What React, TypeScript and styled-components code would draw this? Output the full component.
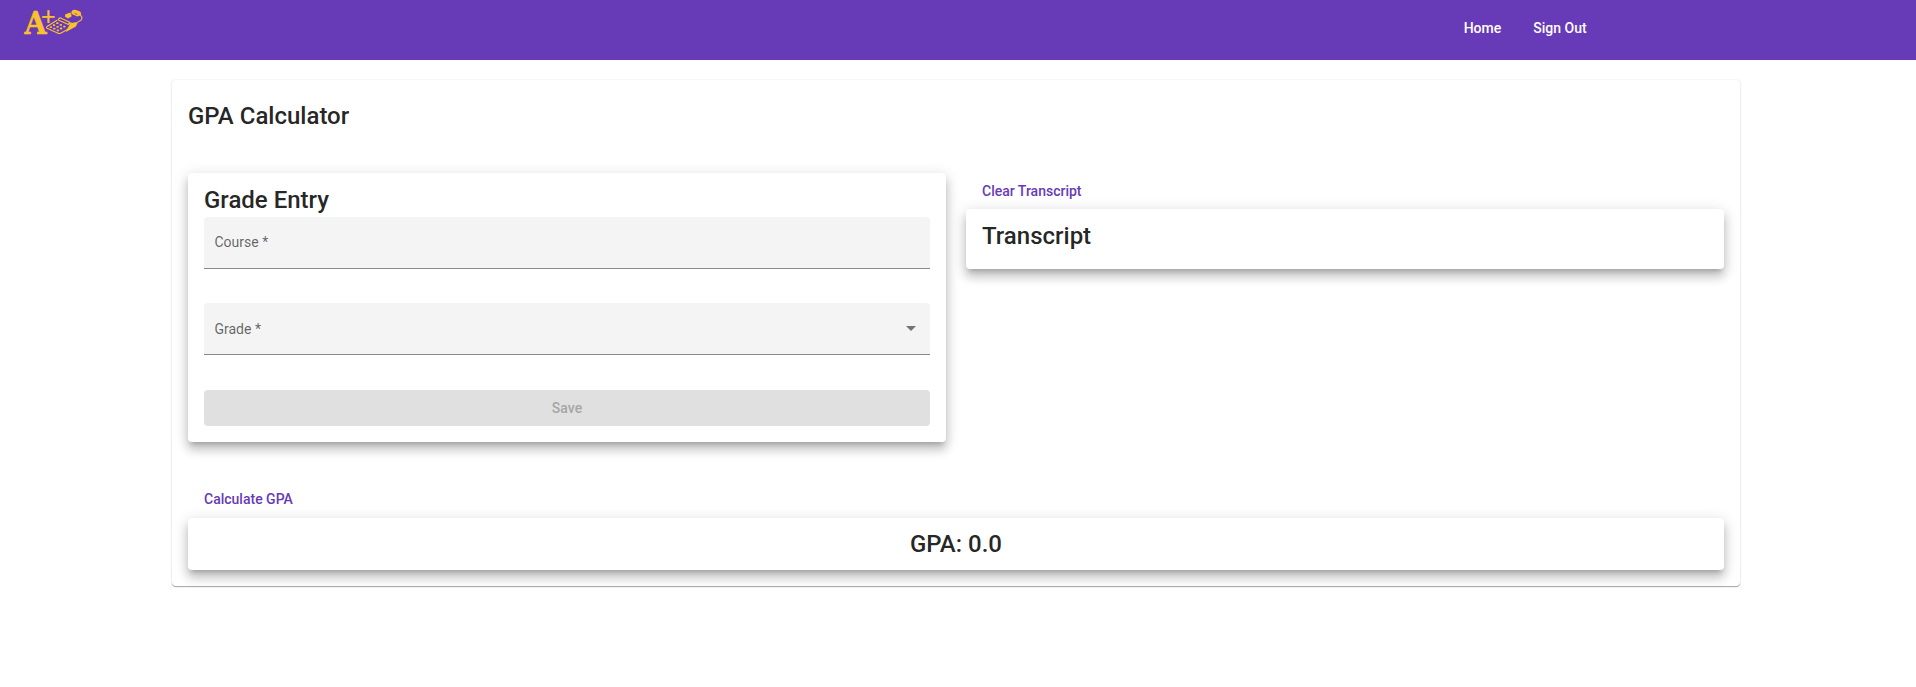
import React from "react";
import styled, { createGlobalStyle } from "styled-components";

const GlobalStyle = createGlobalStyle`
  *, *::before, *::after { box-sizing: border-box; }
  body {
    margin: 0;
    background: #fff;
    color: rgba(0, 0, 0, 0.87);
    font-family: Roboto, "Liberation Sans", sans-serif;
    font-size: 14px;
  }
`;

const Header = styled.header`
  display: flex;
  justify-content: space-between;
  height: 60px;
  padding: 0 313.4px 0 0;
  background: #673ab7;
`;

const LogoArt = styled.svg`
  display: block;
  overflow: visible;
`;

const Nav = styled.nav`
  display: flex;
  height: 56px;
  align-items: center;
`;

const NavLink = styled.a`
  padding: 0 16px;
  color: #fff;
  font-weight: 500;
  line-height: 36px;
`;

const Page = styled.main`
  padding: 20px 176px 20px 172px;
`;

const Card = styled.section<{ $raised?: boolean; $height?: number; $top?: number }>`
  height: ${(p) => (p.$height ? `${p.$height}px` : "auto")};
  padding: ${(p) => p.$top ?? 16}px 16px 16px;
  border-radius: 4px;
  background: #fff;
  box-shadow: ${(p) =>
    p.$raised
      ? "0 5px 5px -3px rgba(0,0,0,.2), 0 8px 10px 1px rgba(0,0,0,.14), 0 3px 14px 2px rgba(0,0,0,.12)"
      : "0 1px 0 0 rgba(0,0,0,.17), 0 1px 1px 0 rgba(0,0,0,.14), 0 0 2px 0 rgba(0,0,0,.1), 0 1px 3px 0 rgba(0,0,0,.08)"};
`;

const Title = styled.h1<{ $center?: boolean }>`
  margin: 0;
  font-size: 24px;
  font-weight: 500;
  line-height: 32px;
  text-align: ${(p) => (p.$center ? "center" : "left")};
`;

const PageTitle = styled(Title)`
  padding: 4px 0 41px;
`;

const Columns = styled.div`
  display: grid;
  grid-template-columns: 1fr 1fr;
  align-items: start;
  gap: 20px;
  margin-bottom: 40px;
`;

const Field = styled.div<{ $first?: boolean }>`
  display: flex;
  align-items: center;
  justify-content: space-between;
  height: 52px;
  margin: ${(p) => (p.$first ? "1px 0 34px" : "0 0 35px")};
  padding: 0 13px ${(p) => (p.$first ? "2px" : "0")} 10.5px;
  border-bottom: 1px solid #8a8a8a;
  border-radius: 4px 4px 0 0;
  background: #f4f4f4;
  color: rgba(0, 0, 0, 0.6);
`;

const Arrow = styled.span`
  border: 5px solid transparent;
  border-top-color: #737373;
  border-bottom: 0;
  margin-right: 1px;
`;

const SaveButton = styled.button`
  display: block;
  width: 100%;
  height: 36px;
  padding: 0;
  border: 0;
  border-radius: 4px;
  background: #e0e0e0;
  color: #a6a6a6;
  font: 500 14px Roboto, sans-serif;
`;

const TextButton = styled.button<{ $lift?: boolean }>`
  display: block;
  height: 36px;
  padding: 0 16px ${(p) => (p.$lift ? "2px" : "0")};
  border: 0;
  background: transparent;
  color: #673ab7;
  font: 500 14px Roboto, sans-serif;
`;

function Logo() {
  return (
    <LogoArt width="90" height="60" viewBox="0 0 90 60" fill="#fbc02d">
      <text transform="translate(24.4 33.6) scale(.89 1)" fontFamily="DejaVu Serif, serif" fontWeight="700" fontSize="32" stroke="#fbc02d" strokeWidth=".5">A</text>
      <text x="41" y="24.6" fontFamily="Liberation Sans, sans-serif" fontSize="25" stroke="#fbc02d" strokeWidth=".2">+</text>
      <g fill="none" stroke="#fbc02d" strokeWidth="1.1" strokeLinejoin="round" strokeLinecap="round">
        <path d="M57 20.3 47 26.5Q46 27.4 47 28.2L57.5 33Q59.5 34 61 33L75 25.5" />
        <path d="m58.3 19.2 1.8-1.4 9.5 4.4-1.2 2.4-9.6-4.4z" />
        <path d="m69 24 2-1.2" />
        <path d="M80.5 15.2q2.5 2.8.7 4.8l-6 3.6" />
      </g>
      <g stroke="#fbc02d" strokeWidth="1.8" strokeLinecap="round">
        <path d="M57 23.2h.7M53.7 25.2h.7M50.6 27.1h.7M60.5 24.9h.7M57.2 26.8h.7M54 28.7h.7M64 26.6h.7M60.7 28.5h.7M57.5 30.4h.7" />
      </g>
      <path d="m66.5 30 4-6.8 5-1 2 .8-1.6 3.6-10 5.4z" />
      <path d="m65.3 14.2 5.2-1.8 1.3 3.8-3.7 2.3-3.1-1.8z" />
      <path d="M72.2 10.5q1.6-1.2 4.1-.4l3.8 1.4q1.5 1.4.8 3.7l-3.5 1.4-5.7-2.7q-1-1.7.5-3.4Z" />
      <path d="m74.7 13.3 2.6 1.2" stroke="#673ab7" strokeWidth=".7" />
    </LogoArt>
  );
}

export default function App() {
  return (
    <>
      <GlobalStyle />
      <Header>
        <Logo />
        <Nav>
          <NavLink>Home</NavLink>
          <NavLink>Sign Out</NavLink>
        </Nav>
      </Header>
      <Page>
        <Card>
          <PageTitle>GPA Calculator</PageTitle>
          <Columns>
            <Card as="form" $raised $top={11}>
              <Title as="h2">Grade Entry</Title>
              <Field $first>Course *</Field>
              <Field>
                Grade *
                <Arrow />
              </Field>
              <SaveButton type="button" disabled>Save</SaveButton>
            </Card>
            <div>
              <TextButton>Clear Transcript</TextButton>
              <Card $raised $height={60} $top={11}>
                <Title as="h2">Transcript</Title>
              </Card>
            </div>
          </Columns>
          <TextButton $lift>Calculate GPA</TextButton>
          <Card $raised $height={52} $top={10}>
            <Title as="h2" $center>GPA: 0.0</Title>
          </Card>
        </Card>
      </Page>
    </>
  );
}
